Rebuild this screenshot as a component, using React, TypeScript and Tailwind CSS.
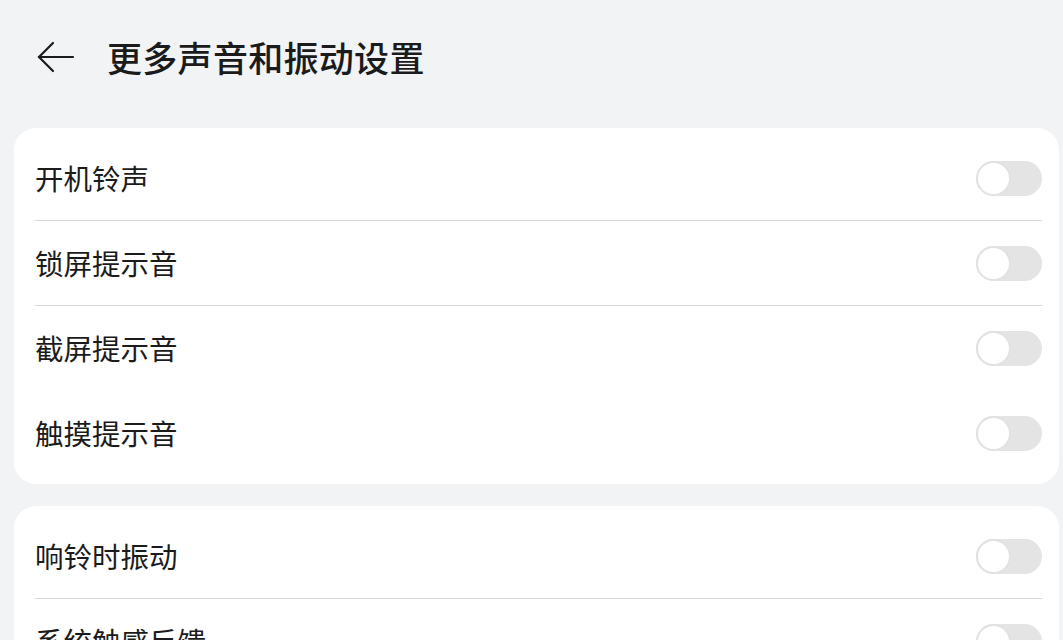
const groups: { label: string; divider: boolean }[][] = [
  [
    { label: '开机铃声', divider: true },
    { label: '锁屏提示音', divider: true },
    { label: '截屏提示音', divider: false },
    { label: '触摸提示音', divider: false },
  ],
  [
    { label: '响铃时振动', divider: true },
    { label: '系统触感反馈', divider: false },
  ],
];

function Toggle() {
  return (
    <div className="relative h-[35px] w-[66px] rounded-full bg-[#e4e4e4]">
      <div className="absolute left-0 top-0 h-[35px] w-[35px] rounded-full border-[2px] border-[#e2e2e2] bg-white" />
    </div>
  );
}

export default function App() {
  return (
    <div
      className="h-[640px] w-[1063px] overflow-hidden bg-[#f1f3f5] text-[#1b1b1b]"
      style={{ fontFamily: '"Noto Sans CJK SC", "Noto Sans", sans-serif' }}
    >
      {/* header */}
      <div className="flex h-[115px] items-center pb-[2px]">
        <div className="ml-[37px] flex h-[34px] w-[38px] items-center">
          <svg width="38" height="34" viewBox="0 0 38 34" fill="none" stroke="#1b1b1b" strokeWidth="2.2" strokeLinecap="round">
            <path d="M2 17H36" />
            <path d="M16 3L2 17L16 31" />
          </svg>
        </div>
        <h1 className="ml-[32px] text-[35px] font-medium leading-none tracking-[0.3px]">更多声音和振动设置</h1>
      </div>

      <div className="mt-[13px] flex flex-col gap-[22px]">
        {groups.map((items, gi) => (
          <div key={gi} className="ml-[14px] w-[1045px] rounded-[22px] bg-white py-[8px] pl-[21px] pr-[17px]">
            {items.map((item) => (
              <div key={item.label}>
                <div className="flex h-[84px] items-center justify-between">
                  <span className="text-[28.5px] leading-none">{item.label}</span>
                  <Toggle />
                </div>
                <div className={item.divider ? 'h-px bg-[#d8d8d8]' : 'h-px'} />
              </div>
            ))}
          </div>
        ))}
      </div>
    </div>
  );
}
